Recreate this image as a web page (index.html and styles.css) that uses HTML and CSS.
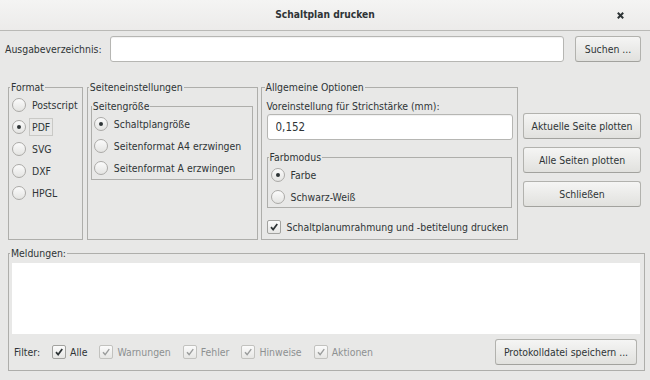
FILE: index.html
```html
<!DOCTYPE html>
<html lang="de">
<head>
    <meta charset="UTF-8">
    <title>Schaltplan drucken</title>
    <link rel="stylesheet" href="styles.css">
</head>
<body>
    <div class="dialog">
        <header class="titlebar">
            <span class="title">Schaltplan drucken</span>
            <svg class="close" viewBox="0 0 10 10"><path d="M2 2 L8 8 M8 2 L2 8"/></svg>
        </header>

        <div class="content">
            <div class="dir-row">
                <label class="dir-label">Ausgabeverzeichnis:</label>
                <input class="entry dir-entry" type="text">
                <button class="btn btn-search">Suchen ...</button>
            </div>

            <div class="groups">
                <fieldset class="frame frame-format">
                    <legend>Format</legend>
                    <div class="opt"><span class="radio"></span><span>Postscript</span></div>
                    <div class="opt"><span class="radio on"></span><span class="focus">PDF</span></div>
                    <div class="opt"><span class="radio"></span><span>SVG</span></div>
                    <div class="opt"><span class="radio"></span><span>DXF</span></div>
                    <div class="opt"><span class="radio"></span><span>HPGL</span></div>
                </fieldset>

                <fieldset class="frame frame-page">
                    <legend>Seiteneinstellungen</legend>
                    <fieldset class="frame frame-size">
                        <legend>Seitengröße</legend>
                        <div class="opt"><span class="radio on"></span><span>Schaltplangröße</span></div>
                        <div class="opt"><span class="radio"></span><span>Seitenformat A4 erzwingen</span></div>
                        <div class="opt"><span class="radio"></span><span>Seitenformat A erzwingen</span></div>
                    </fieldset>
                </fieldset>

                <fieldset class="frame frame-general">
                    <legend>Allgemeine Optionen</legend>
                    <div class="field-label">Voreinstellung für Strichstärke (mm):</div>
                    <input class="entry width-entry" type="text" value="0,152">
                    <fieldset class="frame frame-color">
                        <legend>Farbmodus</legend>
                        <div class="opt"><span class="radio on"></span><span>Farbe</span></div>
                        <div class="opt"><span class="radio"></span><span>Schwarz-Weiß</span></div>
                    </fieldset>
                    <div class="opt opt-check">
                        <span class="check"><svg viewBox="0 0 14 14"><path d="M3.5 7.2 L6 10 L10.8 3.6"/></svg></span>
                        <span>Schaltplanumrahmung und -betitelung drucken</span>
                    </div>
                </fieldset>

                <div class="actions">
                    <button class="btn">Aktuelle Seite plotten</button>
                    <button class="btn">Alle Seiten plotten</button>
                    <button class="btn">Schließen</button>
                </div>
            </div>

            <fieldset class="frame frame-log">
                <legend>Meldungen:</legend>
                <div class="log"></div>
                <div class="filter-row">
                    <span class="filter-label">Filter:</span>
                    <span class="filter"><span class="check"><svg viewBox="0 0 14 14"><path d="M3.5 7.2 L6 10 L10.8 3.6"/></svg></span><span class="alle">Alle</span></span>
                    <span class="filter off"><span class="check"><svg viewBox="0 0 14 14"><path d="M3.5 7.2 L6 10 L10.8 3.6"/></svg></span><span>Warnungen</span></span>
                    <span class="filter off"><span class="check"><svg viewBox="0 0 14 14"><path d="M3.5 7.2 L6 10 L10.8 3.6"/></svg></span><span>Fehler</span></span>
                    <span class="filter off"><span class="check"><svg viewBox="0 0 14 14"><path d="M3.5 7.2 L6 10 L10.8 3.6"/></svg></span><span>Hinweise</span></span>
                    <span class="filter off"><span class="check"><svg viewBox="0 0 14 14"><path d="M3.5 7.2 L6 10 L10.8 3.6"/></svg></span><span>Aktionen</span></span>
                    <button class="btn btn-save">Protokolldatei speichern ...</button>
                </div>
            </fieldset>
        </div>
    </div>
</body>
</html>
```

FILE: styles.css
```css
body {
    margin: 0;
    background-color: #e8e8e7;
    font-family: "DejaVu Sans Condensed", "DejaVu Sans", sans-serif;
    font-stretch: condensed;
    font-size: 10.4px;
    line-height: 14px;
    color: #2e3436;
    white-space: nowrap;
}

.dialog {
    width: 650px;
    height: 380px;
}

/* Titelleiste */
.titlebar {
    height: 30px;
    display: flex;
    align-items: center;
    justify-content: center;
    position: relative;
    background: linear-gradient(#f4f4f3, #ecebea);
    border-bottom: 1px solid #b9b9b6;
}

.title {
    font-weight: bold;
    font-size: 10.2px;
}

.close {
    position: absolute;
    right: 25px;
    top: 11px;
    width: 9px;
    height: 9px;
}

.close path {
    stroke: #2e3436;
    stroke-width: 2.2;
    fill: none;
}

.content {
    padding: 5px 9px 0 5px;
}

.dir-row {
    display: flex;
    align-items: center;
    height: 26px;
}

.dir-label {
    width: 105px;
}

.entry {
    box-sizing: border-box;
    height: 26px;
    border: 1px solid #b6b6b3;
    border-radius: 3px;
    background: #fff;
    box-shadow: inset 0 1px 1px rgba(0, 0, 0, 0.06);
    font: inherit;
    color: inherit;
    padding: 0 8px;
}

.dir-entry {
    width: 454px;
}

.btn {
    box-sizing: border-box;
    height: 26px;
    border: 1px solid #b2b2ae;
    border-bottom-color: #a2a29e;
    border-radius: 3px;
    background: linear-gradient(#f5f5f4, #e1e1de);
    font: inherit;
    color: inherit;
    padding: 0 4px;
    white-space: nowrap;
}

.btn-search {
    width: 66px;
    margin-left: 11px;
}

/* Gruppen */
.groups {
    display: flex;
    margin-top: 18px;
    padding-left: 3px;
}

.frame {
    margin: 0;
    padding: 0 4px 0 3px;
    border: 1px solid #aeaeab;
    min-width: 0;
    box-sizing: border-box;
}

.frame legend {
    padding: 0 1px;
    margin-left: -2px;
    height: 14px;
}

.frame-format {
    width: 75px;
    height: 160px;
}

.frame-page {
    width: 171px;
    height: 160px;
    margin-left: 4px;
}

.frame-size {
    margin-top: 5px;
    height: 81px;
    padding-left: 2px;
}

.frame-general {
    width: 258px;
    height: 160px;
    margin-left: 3px;
    padding: 0 5px;
}

.opt {
    display: flex;
    align-items: center;
    height: 22px;
}

.radio {
    box-sizing: border-box;
    width: 14px;
    height: 14px;
    border: 1px solid #abaaa7;
    border-radius: 50%;
    background: linear-gradient(#fbfbfb, #e4e4e2);
    margin-right: 6px;
    display: flex;
    align-items: center;
    justify-content: center;
    flex-shrink: 0;
}

.radio.on::after {
    content: "";
    width: 4px;
    height: 4px;
    border-radius: 50%;
    background: #2e3436;
}

.focus {
    border: 1px solid #c9c9c6;
    padding: 1px 2px;
    margin-left: -3px;
}

.field-label {
    margin-top: 5px;
}

.width-entry {
    width: 246px;
    margin-top: 1px;
    font-size: 11.5px;
}

.frame-color {
    margin-top: 10px;
    height: 58px;
    padding-left: 3px;
}

.opt-check {
    margin-top: 8px;
}

.check {
    box-sizing: border-box;
    width: 14px;
    height: 14px;
    border: 1px solid #a2a29f;
    border-radius: 2px;
    background: linear-gradient(#fbfbfb, #e6e6e4);
    margin-right: 6px;
    flex-shrink: 0;
    display: inline-flex;
}

.check svg {
    width: 12px;
    height: 12px;
}

.check path {
    fill: none;
    stroke: #2e3436;
    stroke-width: 2;
}

.actions {
    display: flex;
    flex-direction: column;
    gap: 8px;
    margin-left: 5px;
    padding-top: 33px;
}

.actions .btn {
    width: 118px;
}

/* Meldungen */
.frame-log {
    width: 637px;
    height: 125px;
    margin: 6px 0 0 3px;
    padding: 0 4px 0 3px;
}

.log {
    height: 71px;
    margin-top: 3px;
    background: #fff;
}

.filter-row {
    display: flex;
    align-items: center;
    margin-top: 5px;
    height: 26px;
}

.filter-label {
    margin-left: 2px;
    margin-right: 12px;
}

.filter {
    display: flex;
    align-items: center;
    margin-right: 12px;
}

.filter .check {
    margin-right: 4px;
}

.filter.off {
    color: #8d9091;
}

.filter.off .check {
    border-color: #c2c2bf;
}

.filter.off .check path {
    stroke: #9a9c9c;
    stroke-width: 1.6;
}

.btn-save {
    margin-left: auto;
    width: 142px;
    margin-right: 3px;
}
```
